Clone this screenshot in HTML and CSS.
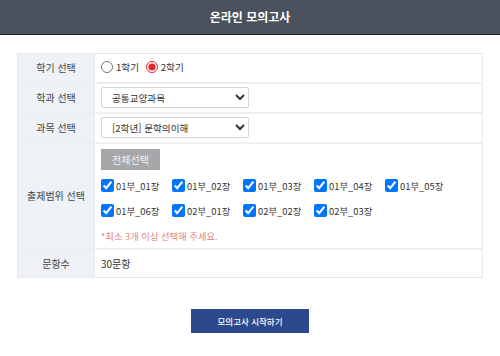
FILE: index.html
```html
<!DOCTYPE html>
<html lang="ko">
  <head>
    <meta charset="UTF-8">
    <link rel="stylesheet" href="styles.css">
  </head>
  <body>
    <header class="top">온라인 모의고사</header>
    <main>
      <table class="form">
        <tr class="row-term">
          <th>학기 선택</th>
          <td>
            <label class="radio"><input type="radio" name="term" value="1" /> 1학기</label>
            <label class="radio"><input type="radio" name="term" value="2" checked /> 2학기</label>
          </td>
        </tr>
        <tr class="row-select">
          <th>학과 선택</th>
          <td>
            <select class="pick">
              <option>공통교양과목</option>
            </select>
          </td>
        </tr>
        <tr class="row-select">
          <th>과목 선택</th>
          <td>
            <select class="pick">
              <option>[2학년] 문학의이해</option>
            </select>
          </td>
        </tr>
        <tr class="row-range">
          <th>출제범위 선택</th>
          <td>
            <button class="btn-all">전체선택</button>
            <div class="chapters">
              <label><input type="checkbox" checked /> 01부_01장</label>
              <label><input type="checkbox" checked /> 01부_02장</label>
              <label><input type="checkbox" checked /> 01부_03장</label>
              <label><input type="checkbox" checked /> 01부_04장</label>
              <label><input type="checkbox" checked /> 01부_05장</label>
              <label><input type="checkbox" checked /> 01부_06장</label>
              <label><input type="checkbox" checked /> 02부_01장</label>
              <label><input type="checkbox" checked /> 02부_02장</label>
              <label><input type="checkbox" checked /> 02부_03장</label>
            </div>
            <p class="note">*최소 3개 이상 선택해 주세요.</p>
          </td>
        </tr>
        <tr class="row-count">
          <th>문항수</th>
          <td>30문항</td>
        </tr>
      </table>
      <div class="footer">
        <button class="btn-start">모의고사 시작하기</button>
      </div>
    </main>
  </body>
</html>
```

FILE: styles.css
```css
html, body {
  margin: 0;
  padding: 0;
  font-family: "Noto Sans CJK KR", "Liberation Sans", sans-serif;
  font-size: 10px;
  color: #333;
  background-color: #fff;
}
* {
  box-sizing: border-box;
}
.top {
  height: 35px;
  line-height: 34px;
  background-color: #4c525d;
  border-bottom: 1px solid #1e1f22;
  color: #fff;
  font-size: 12px;
  font-weight: bold;
  text-align: center;
}
main {
  padding: 18px 17px 0;
}
.form {
  width: 466px;
  border-collapse: collapse;
  border: 1px solid #e8e8e8;
}
.form th, .form td {
  border-top: 2px solid #efefef;
  padding: 0;
  vertical-align: middle;
}
.form tr:first-child th, .form tr:first-child td {
  border-top: 0;
}
.form th {
  width: 77px;
  background-color: #eef1f6;
  font-weight: normal;
  font-size: 10px;
  color: #444;
  text-align: center;
  border-right: 1px solid #e8ebf0;
}
.form td {
  padding-left: 6px;
}
.row-term {
  height: 29px;
}
.row-select {
  height: 30px;
}
.row-range {
  height: 106px;
}
.row-count {
  height: 29px;
}
.radio {
  display: inline-flex;
  align-items: center;
  margin-right: 4px;
  font-size: 9.6px;
}
.radio input {
  width: 12px;
  height: 12px;
  margin: 0 3px 0 0;
  accent-color: #e3262a;
}
.pick {
  width: 148px;
  height: 21px;
  border: 1px solid #d6d6d6;
  border-radius: 2px;
  background: #fff;
  font-family: inherit;
  font-size: 9.6px;
  color: #333;
  padding: 0 6px;
}
.btn-all {
  display: block;
  width: 59px;
  height: 21px;
  margin: 0 0 7px;
  border: 0;
  background-color: #a5a7a9;
  color: #f4f4f4;
  font-family: inherit;
  font-size: 10px;
  padding: 0;
}
.chapters {
  display: grid;
  grid-template-columns: repeat(5, 71px);
  row-gap: 7px;
}
.chapters label {
  display: flex;
  align-items: center;
  height: 18px;
  font-size: 9.4px;
  white-space: nowrap;
}
.chapters input {
  width: 13px;
  height: 13px;
  margin: 0 2px 0 0;
}
.note {
  margin: 9px 0 0;
  color: #e8847d;
  font-size: 9.3px;
}
.footer {
  padding-top: 31px;
  text-align: center;
}
.btn-start {
  width: 118px;
  height: 24px;
  border: 0;
  background-color: #2c4a8b;
  color: #fff;
  font-family: inherit;
  font-size: 8.5px;
  font-weight: 500;
  padding: 0;
}
```
